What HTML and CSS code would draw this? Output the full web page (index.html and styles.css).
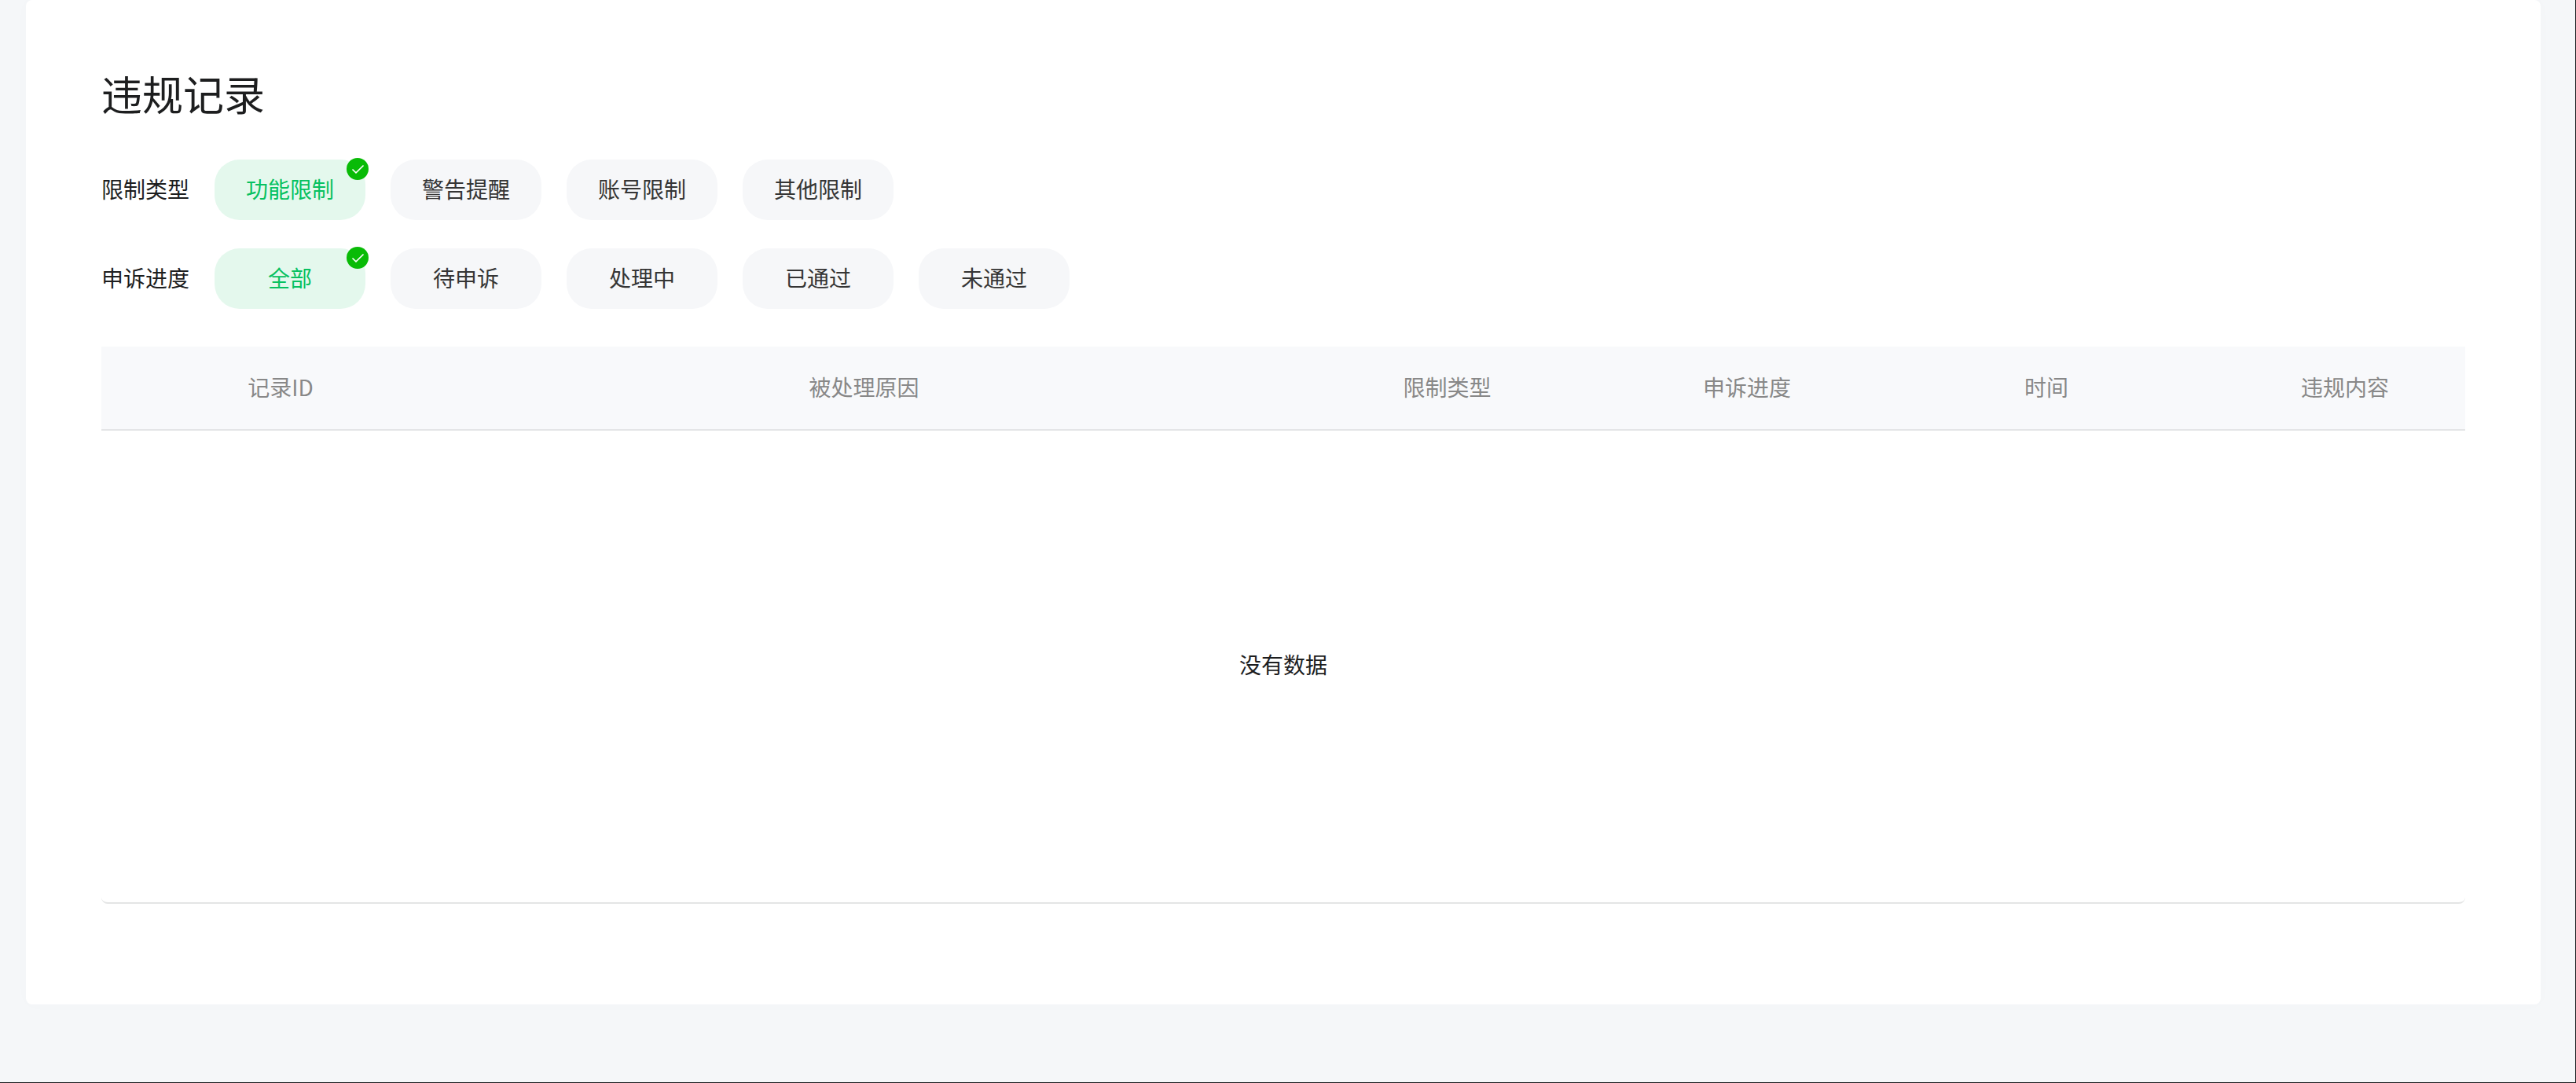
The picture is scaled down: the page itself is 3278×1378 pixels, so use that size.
FILE: index.html
```html
<!DOCTYPE html>
<html lang="zh-CN">
<head>
    <meta charset="UTF-8">
    <meta name="viewport" content="width=device-width, initial-scale=1.0">
    <title>违规记录</title>
    <link rel="stylesheet" href="styles.css">
</head>
<body>

<div class="card">
    <h2 class="title">违规记录</h2>

    <div class="filter">
        <span class="filter-label">限制类型</span>
        <button class="pill active">功能限制
            <svg class="check" viewBox="0 0 28 28"><circle cx="14" cy="14" r="14"/><path d="M7.5 14.5l4.5 4.3 9.5-9.3"/></svg>
        </button>
        <button class="pill">警告提醒</button>
        <button class="pill">账号限制</button>
        <button class="pill">其他限制</button>
    </div>

    <div class="filter">
        <span class="filter-label">申诉进度</span>
        <button class="pill active">全部
            <svg class="check" viewBox="0 0 28 28"><circle cx="14" cy="14" r="14"/><path d="M7.5 14.5l4.5 4.3 9.5-9.3"/></svg>
        </button>
        <button class="pill">待申诉</button>
        <button class="pill">处理中</button>
        <button class="pill">已通过</button>
        <button class="pill">未通过</button>
    </div>

    <div class="table">
        <div class="table-head">
            <span>记录ID</span>
            <span>被处理原因</span>
            <span>限制类型</span>
            <span>申诉进度</span>
            <span>时间</span>
            <span>违规内容</span>
        </div>
        <div class="table-empty">没有数据</div>
    </div>
</div>

</body>
</html>
```
FILE: styles.css
```css
* {
    box-sizing: border-box;
}

body {
    margin: 0;
    height: 1378px;
    padding: 0 44px 0 33px;
    background-color: #f5f7f9;
    border-right: 1px solid #1c1e21;
    border-bottom: 1px solid #1c1e21;
    font-family: "Noto Sans CJK SC", sans-serif;
    font-size: 28px;
    color: #1d1e1f;
    overflow: hidden;
}

.card {
    height: 1278px;
    padding: 81px 96px 0;
    background-color: #fff;
    border-radius: 8px;
    box-shadow: 0 0 20px rgba(0, 0, 0, 0.015);
}

.title {
    margin: 0 0 46px;
    font-size: 52px;
    font-weight: 400;
    line-height: 76px;
}

.filter {
    display: flex;
    align-items: center;
    gap: 32px;
    height: 77px;
    margin-bottom: 36px;
}

.filter-label {
    width: 112px;
    padding-bottom: 4px;
}

.pill {
    position: relative;
    width: 192px;
    height: 77px;
    padding: 0 0 4px;
    border: none;
    border-radius: 32px;
    background-color: #f6f7f9;
    color: #353535;
    font: inherit;
    cursor: pointer;
}

.pill.active {
    background-color: #e4f8ed;
    color: #07c160;
}

.check {
    position: absolute;
    top: -2px;
    right: -4px;
    width: 28px;
    height: 28px;
    fill: #09bb07;
}

.check path {
    fill: none;
    stroke: #fff;
    stroke-width: 1.6;
}

.table {
    height: 709px;
    margin-top: 48px;
    border-bottom: 2px solid #e4e5e5;
    border-radius: 0 0 8px 8px;
}

.table-head {
    display: grid;
    grid-template-columns: 456px 1029px 455px 308px 454px 306px;
    align-items: center;
    height: 107px;
    padding-bottom: 4px;
    background-color: #f8f9fb;
    border-bottom: 2px solid #e4e5e7;
    color: #888;
    text-align: center;
}

.table-empty {
    display: flex;
    align-items: center;
    justify-content: center;
    height: 600px;
    padding-bottom: 6px;
}
```
